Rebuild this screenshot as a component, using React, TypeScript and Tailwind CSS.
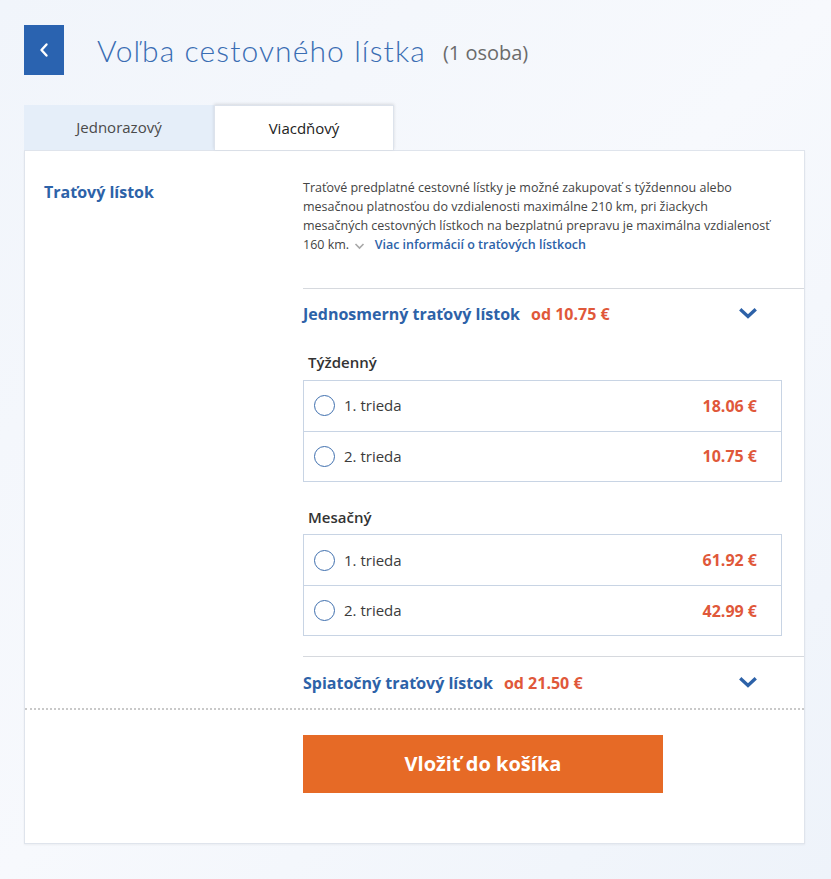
import { useState } from "react";

const sans = { fontFamily: '"Open Sans", "Noto Sans", sans-serif' };

function Chevron({ className = "" }: { className?: string }) {
  return (
    <svg width="20" height="14" viewBox="0 0 20 14" className={className}>
      <path d="M3.5 3.5 L10 9.5 L16.5 3.5" fill="none" stroke="#2d62a8" strokeWidth="3.4" strokeLinecap="square" />
    </svg>
  );
}

function OptionBox({ rows, name }: { rows: { label: string; price: string }[]; name: string }) {
  const [sel, setSel] = useState<string | null>(null);
  return (
    <div className="border border-[#c8d4e4] bg-white">
      {rows.map((r, i) => (
        <label
          key={r.label}
          onClick={() => setSel(r.label)}
          className={`flex items-center h-[50px] pl-[10px] pr-[24px] cursor-pointer ${i > 0 ? "border-t border-[#c8d4e4]" : ""}`}
        >
          <span className="w-[21px] h-[21px] rounded-full border-[1.5px] border-[#3f6fae] flex items-center justify-center">
            {sel === r.label && <span className="w-[11px] h-[11px] rounded-full bg-[#2d62a8]" />}
          </span>
          <span className="ml-[9px] text-[15px] text-[#3b3b3b]">{r.label}</span>
          <span className="ml-auto text-[16px] font-bold text-[#e0583a]">{r.price}</span>
          <input type="radio" name={name} className="hidden" />
        </label>
      ))}
    </div>
  );
}

export default function App() {
  const [tab, setTab] = useState(1);
  return (
    <div
      className="min-h-[879px] w-full bg-gradient-to-br from-[#f1f5fb] via-[#f7f9fd] to-[#eef3fa] px-[24px] pt-[25px] pb-[36px]"
      style={sans}
    >
      <div className="flex items-center">
        <button className="w-[40px] h-[50px] bg-[#2a63b0] flex items-center justify-center">
          <svg width="12" height="16" viewBox="0 0 12 16">
            <path d="M8.5 2.5 L3.5 8 L8.5 13.5" fill="none" stroke="#fff" strokeWidth="2.4" strokeLinecap="round" strokeLinejoin="round" />
          </svg>
        </button>
        <h1
          className="ml-[33px] text-[30px] font-light text-[#3a6db3] tracking-[1.1px]"
          style={{ fontFamily: '"Lato", "Open Sans", sans-serif' }}
        >
          Voľba cestovného lístka
        </h1>
        <span className="ml-[17px] mt-[6px] text-[20px] text-[#6b6b6b]">(1 osoba)</span>
      </div>

      <div className="mt-[30px] flex">
        <button
          onClick={() => setTab(0)}
          className={`w-[190px] h-[45px] text-[15px] ${tab === 0 ? "bg-white text-[#222] shadow-[0_-1px_3px_rgba(0,0,0,0.12)]" : "bg-[#e5eef9] text-[#4a4a4a]"}`}
        >
          Jednorazový
        </button>
        <button
          onClick={() => setTab(1)}
          className={`w-[180px] h-[45px] text-[15px] ${tab === 1 ? "bg-white text-[#222] shadow-[0_-1px_3px_rgba(0,0,0,0.12)] border border-b-0 border-[#dde3ec]" : "bg-[#e5eef9] text-[#4a4a4a]"}`}
        >
          Viacdňový
        </button>
      </div>

      <div className="w-[781px] bg-white border border-[#dfe4ec] shadow-[0_1px_2px_rgba(0,0,0,0.05)]">
        <div className="flex pt-[27px]">
          <div className="w-[278px] pl-[19px] pt-[2px]">
            <h2 className="text-[16px] font-bold text-[#2d62a8]">Traťový lístok</h2>
          </div>
          <div className="flex-1">
            <p className="text-[12.5px] leading-[19px] text-[#444]">
              Traťové predplatné cestovné lístky je možné zakupovať s týždennou alebo
              <br />
              mesačnou platnosťou do vzdialenosti maximálne 210 km, pri žiackych
              <br />
              mesačných cestovných lístkoch na bezplatnú prepravu je maximálna vzdialenosť
              <br />
              160 km.{" "}
              <svg width="11" height="8" viewBox="0 0 11 8" className="inline-block ml-[2px] mr-[6px] align-middle">
                <path d="M1.5 2 L5.5 6 L9.5 2" fill="none" stroke="#a8a8a8" strokeWidth="1.6" />
              </svg>{" "}
              <a className="font-semibold text-[#2d62a8]">Viac informácií o traťových lístkoch</a>
            </p>

            <div className="mt-[34px] border-t border-[#d6d9de]">
              <div className="flex items-center h-[50px] pr-[46px]">
                <span className="text-[16px] font-bold text-[#2d62a8]">Jednosmerný traťový lístok</span>
                <span className="ml-[11px] text-[16px] font-bold text-[#e0583a]">od 10.75 €</span>
                <Chevron className="ml-auto" />
              </div>
              <div className="pr-[22px] pb-[20px]">
                <div className="pl-[5px] pt-[12px] pb-[6px] text-[15px] font-semibold text-[#333]">Týždenný</div>
                <OptionBox
                  name="tyzdenny"
                  rows={[
                    { label: "1. trieda", price: "18.06 €" },
                    { label: "2. trieda", price: "10.75 €" },
                  ]}
                />
                <div className="pl-[5px] pt-[24px] pb-[6px] text-[15px] font-semibold text-[#333]">Mesačný</div>
                <OptionBox
                  name="mesacny"
                  rows={[
                    { label: "1. trieda", price: "61.92 €" },
                    { label: "2. trieda", price: "42.99 €" },
                  ]}
                />
              </div>
            </div>

            <div className="border-t border-[#d6d9de]">
              <div className="flex items-center h-[51px] pr-[46px]">
                <span className="text-[16px] font-bold text-[#2d62a8]">Spiatočný traťový lístok</span>
                <span className="ml-[11px] text-[16px] font-bold text-[#e0583a]">od 21.50 €</span>
                <Chevron className="ml-auto" />
              </div>
            </div>
          </div>
        </div>

        <div className="border-t-2 border-dotted border-[#c9c9c9]" />

        <div className="pl-[278px] pt-[25px] pb-[50px]">
          <button className="w-[360px] h-[58px] bg-[#e66a26] text-white text-[20px] font-bold">
            Vložiť do košíka
          </button>
        </div>
      </div>
    </div>
  );
}
